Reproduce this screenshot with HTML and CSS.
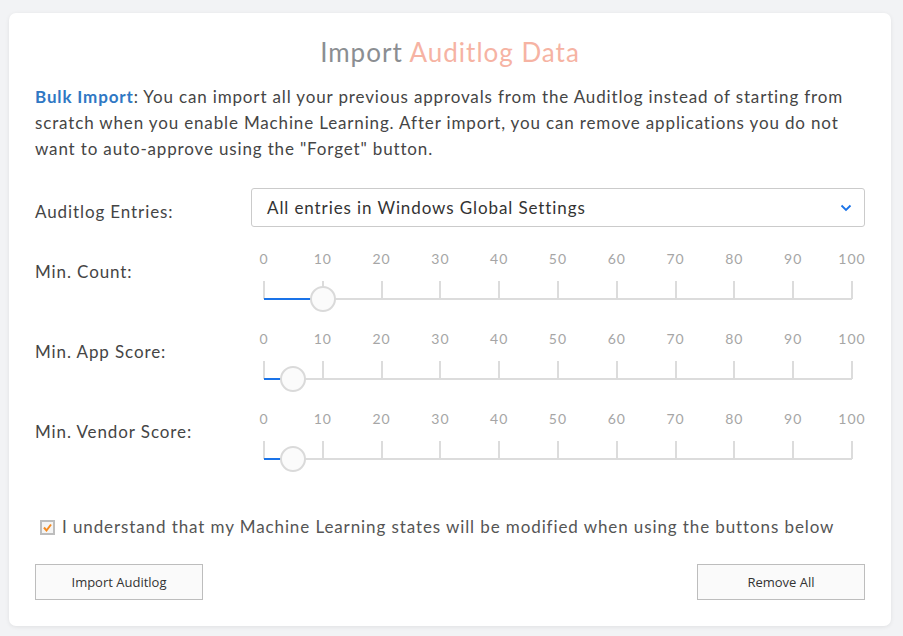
FILE: index.html
```html
<!DOCTYPE html>
<html>
<head>
<meta charset="utf-8">
<link rel="stylesheet" href="styles.css">
</head>
<body>
<div class="card">
  <h1 class="title"><span class="t-grey">Import</span> <span class="t-salmon">Auditlog Data</span></h1>
  <p class="intro"><b class="strong">Bulk Import</b>: You can import all your previous approvals from the Auditlog instead of starting from scratch when you enable Machine Learning. After import, you can remove applications you do not want to auto-approve using the "Forget" button.</p>

  <div class="form">
    <div class="label label-select">Auditlog Entries:</div>
    <div class="select">
      <span>All entries in Windows Global Settings</span>
      <svg class="chev" width="12" height="8" viewBox="0 0 12 8"><polyline points="1.5,1.5 6,6 10.5,1.5" fill="none" stroke="#1a73e8" stroke-width="1.8"/></svg>
    </div>

    <div class="label label-slider first">Min. Count:</div>
    <div class="slider first">
      <div class="nums"><span>0</span><span>10</span><span>20</span><span>30</span><span>40</span><span>50</span><span>60</span><span>70</span><span>80</span><span>90</span><span>100</span></div>
      <div class="ruler">
        <div class="ticks"><i></i><i></i><i></i><i></i><i></i><i></i><i></i><i></i><i></i><i></i><i></i></div>
        <div class="track"><div class="fill" style="width:10%"></div><div class="thumb" style="left:10%"></div></div>
      </div>
    </div>

    <div class="label label-slider">Min. App Score:</div>
    <div class="slider">
      <div class="nums"><span>0</span><span>10</span><span>20</span><span>30</span><span>40</span><span>50</span><span>60</span><span>70</span><span>80</span><span>90</span><span>100</span></div>
      <div class="ruler">
        <div class="ticks"><i></i><i></i><i></i><i></i><i></i><i></i><i></i><i></i><i></i><i></i><i></i></div>
        <div class="track"><div class="fill" style="width:5%"></div><div class="thumb" style="left:5%"></div></div>
      </div>
    </div>

    <div class="label label-slider">Min. Vendor Score:</div>
    <div class="slider">
      <div class="nums"><span>0</span><span>10</span><span>20</span><span>30</span><span>40</span><span>50</span><span>60</span><span>70</span><span>80</span><span>90</span><span>100</span></div>
      <div class="ruler">
        <div class="ticks"><i></i><i></i><i></i><i></i><i></i><i></i><i></i><i></i><i></i><i></i><i></i></div>
        <div class="track"><div class="fill" style="width:5%"></div><div class="thumb" style="left:5%"></div></div>
      </div>
    </div>
  </div>

  <label class="check">
    <svg class="box" width="15" height="15" viewBox="0 0 15 15"><rect x="1" y="1" width="13" height="13" fill="#f4f4f4" stroke="#bdbdbd" stroke-width="2"/><polyline points="4,7.5 6.5,10.5 11,4.5" fill="none" stroke="#f58a1f" stroke-width="2"/></svg>
    <span>I understand that my Machine Learning states will be modified when using the buttons below</span>
  </label>

  <div class="buttons">
    <button class="btn">Import Auditlog</button>
    <button class="btn">Remove All</button>
  </div>
</div>
</body>
</html>
```
FILE: styles.css
```css
* { box-sizing: border-box; }
html, body { margin: 0; padding: 0; }
body {
  background: #f2f3f5;
  padding: 13px 12px 10px 9px;
  font-family: "Lato", "Open Sans", sans-serif;
  color: #444;
}
.card {
  background: #fff;
  border-radius: 7px;
  box-shadow: 0 1px 4px rgba(0,0,0,0.08);
  padding: 22px 26px 25px 26px;
  height: 613px;
}
.title {
  margin: 0 0 15px 0;
  text-align: center;
  font-size: 26px;
  line-height: 34px;
  font-weight: 400;
  letter-spacing: 1px;
}
.t-grey { color: #8b8e92; }
.t-salmon { color: #f6b3a3; }
.intro {
  margin: 0;
  font-size: 17px;
  line-height: 26px;
  color: #454545;
  letter-spacing: 0.85px;
}
.strong { color: #2f78c4; font-weight: 700; }
.form {
  display: grid;
  grid-template-columns: 216px 1fr;
  margin-top: 26px;
}
.label {
  font-size: 17px;
  line-height: 26px;
  color: #454545;
  letter-spacing: 0.9px;
}
.label-select { padding-top: 11px; }
.label-slider { padding-top: 8px; }
.first { margin-top: 24px; }
.select {
  height: 39px;
  border: 1px solid #cbcbcb;
  border-radius: 3px;
  display: flex;
  align-items: center;
  justify-content: space-between;
  padding: 0 12px 0 15px;
  font-size: 17px;
  color: #333;
  letter-spacing: 0.9px;
}
.chev { display: block; }
.slider {
  padding: 0 13px;
  height: 80px;
}
.nums {
  display: flex;
  justify-content: space-between;
  height: 16px;
  font-size: 14px;
  line-height: 16px;
  color: #a6a6a6;
  letter-spacing: 1px;
}
.nums span {
  width: 0;
  display: flex;
  justify-content: center;
  white-space: nowrap;
}
.ruler {
  position: relative;
  height: 64px;
  padding-top: 14px;
}
.ticks {
  display: flex;
  justify-content: space-between;
  height: 18px;
}
.ticks i {
  width: 2px;
  margin-left: -1px;
  margin-right: -1px;
  background: #dcdcdc;
}
.track {
  position: relative;
  height: 2px;
  margin-top: -1px;
  background: #dcdcdc;
}
.fill {
  height: 2px;
  background: #1a73e8;
}
.thumb {
  position: absolute;
  top: -12px;
  width: 26px;
  height: 26px;
  margin-left: -13px;
  border-radius: 50%;
  background: #fbfbfb;
  border: 2px solid #dadada;
}
.check {
  display: flex;
  align-items: center;
  margin-top: 23px;
  padding-left: 5px;
  font-size: 17px;
  line-height: 26px;
  color: #555;
  letter-spacing: 0.9px;
}
.box { display: block; margin-right: 7px; }
.buttons {
  display: flex;
  justify-content: space-between;
  margin-top: 24px;
}
.btn {
  width: 168px;
  height: 36px;
  background: #fafafa;
  border: 1px solid #bdbdbd;
  border-radius: 0;
  font-family: "Open Sans", sans-serif;
  font-size: 13px;
  color: #333;
  padding: 0;
}
```
